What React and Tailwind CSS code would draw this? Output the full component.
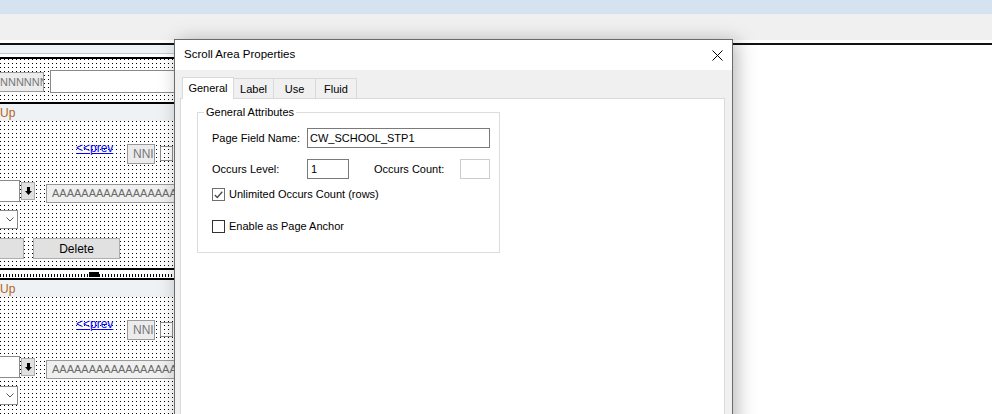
import React from 'react'

const dots =
  'bg-white bg-[image:conic-gradient(at_1px_1px,transparent_270deg,#000_0)] bg-[length:4px_4px]'

const CanvasRow = () => {
  // one scroll-area body on the page designer canvas; fields sit where the designer put them
  return (
    <div className={`relative h-[147px] ${dots}`}>
      <a className="absolute left-[76px] top-[20px] text-[12px] leading-[14px] text-[#0000ff] underline">
        &lt;&lt;prev
      </a>
      <div className="absolute left-[127px] top-[23px] h-[20px] w-[28px] overflow-hidden border border-[#9a9a9a] bg-[#ececec] pl-[5px] text-[12px] leading-[18px] text-[#777]">
        NNI
      </div>
      <div className="absolute left-[160px] top-[25px] h-[15px] w-[13px] border border-[#8c8c8c]" />

      <div className="absolute left-[-20px] top-[59px] h-[22px] w-[40px] border border-[#8a8a8a] bg-white" />
      <div className="absolute left-[21px] top-[61px] flex h-[18px] w-[14px] items-center justify-center border border-[#adadad] bg-[#e1e1e1]">
        <svg width="7" height="8" viewBox="0 0 7 8">
          <rect x="2" y="0" width="3" height="4" fill="#000" />
          <polygon points="0,4 7,4 3.5,8" fill="#000" />
        </svg>
      </div>
      <div className="absolute left-[46px] top-[63px] h-[19px] w-[160px] overflow-hidden whitespace-nowrap border border-[#9a9a9a] bg-[#f0f0f0] pl-[5px] text-[11px] leading-[17px] text-[#6a6a6a]">
        AAAAAAAAAAAAAAAAAAAA
      </div>

      <div className="absolute left-[-20px] top-[89px] flex h-[19px] w-[38px] items-center justify-end border border-[#8a8a8a] bg-white pr-[3px]">
        <svg width="8" height="5" viewBox="0 0 8 5">
          <path d="M0.5 0.5 L4 4 L7.5 0.5" fill="none" stroke="#555" strokeWidth="1" />
        </svg>
      </div>

      <div className="absolute left-[-20px] top-[117px] h-[21px] w-[44px] border border-[#adadad] bg-[#e1e1e1]" />
      <div className="absolute left-[33px] top-[117px] flex h-[21px] w-[87px] items-center justify-center border border-[#adadad] bg-[#e1e1e1] text-[12px] text-black">
        Delete
      </div>
    </div>
  )
}

const Band = () => (
  <div className="h-[17px] bg-[#eef2f4] pt-[2px] text-[12px] leading-[15px] text-[#b8621b]">Up</div>
)

const Tab = ({ label, width, active }) =>
  active ? (
    <div
      className={`relative z-10 -mb-px flex h-[22px] items-center justify-center border border-b-0 border-[#d9d9d9] bg-white ${width}`}
    >
      {label}
    </div>
  ) : (
    <div
      className={`-ml-px flex h-[20px] items-center justify-center border border-b-0 border-[#d9d9d9] bg-[#f0f0f0] pt-[1px] ${width}`}
    >
      {label}
    </div>
  )

export default function App() {
  return (
    <div className="relative h-[414px] w-[992px] overflow-hidden bg-white font-['Liberation_Sans',Arial,sans-serif] text-[11px] text-black">
      {/* window chrome behind the dialog */}
      <div className="h-[14px] bg-[#d5e2f0]" />
      <div className="h-[26px] bg-[#f0f0f0]" />
      <div className="h-[3px] bg-white" />
      <div className="h-[2px] bg-[#111]" />

      <div className="flex">
        {/* page designer canvas */}
        <div className="w-[174px] overflow-hidden">
          <div className="h-[8px] bg-[#eef3f8]" />
          <div className="h-px bg-[#c4c9ce]" />
          <div className="h-[3px] bg-white" />
          <div className="h-[2px] bg-black" />
          <div className={`relative h-[43px] ${dots}`}>
            <div className="absolute left-[-10px] top-[13px] h-[20px] w-[54px] overflow-hidden whitespace-nowrap border border-[#9a9a9a] bg-[#ececec] pl-[9px] text-[11px] leading-[18px] text-[#777]">
              NNNNNNN
            </div>
            <div className="absolute left-[50px] top-[11px] h-[23px] w-[160px] border border-[#8a8a8a] bg-white" />
          </div>
          <div className="h-[2px] bg-black" />
          <Band />
          <CanvasRow />
          <div className="h-[2px] bg-black" />
          <div className="h-[4px] bg-white" />
          <div className="relative h-[3px] bg-[image:repeating-linear-gradient(90deg,#000_0_1px,transparent_1px_3px)]">
            <div className="absolute left-[89px] top-[-2px] h-[5px] w-[10px] bg-black" />
          </div>
          <div className="h-px bg-white" />
          <div className="h-[2px] bg-black" />
          <Band />
          <CanvasRow />
        </div>
        <div className="flex-1 bg-white" />
      </div>

      {/* Scroll Area Properties dialog */}
      <div className="absolute bottom-[-20px] left-[174px] top-[39px] flex w-[559px] flex-col border border-[#6b6b6b] bg-[#f0f0f0] shadow-[4px_2px_18px_rgba(0,0,0,0.28)]">
        <div className="flex h-[30px] shrink-0 items-center justify-between bg-white pl-[9px] pr-[9px]">
          <span className="text-[11.5px]">Scroll Area Properties</span>
          <svg width="11" height="11" viewBox="0 0 11 11">
            <path d="M0.5 0.5 L10.5 10.5 M10.5 0.5 L0.5 10.5" stroke="#000" strokeWidth="1" />
          </svg>
        </div>

        <div className="flex flex-1 flex-col pl-[5px] pr-[7px] pt-[7px]">
          <div className="flex h-[21px] items-end pl-[2px]">
            <Tab label="General" width="w-[52px]" active />
            <Tab label="Label" width="w-[41px]" />
            <Tab label="Use" width="w-[43px]" />
            <Tab label="Fluid" width="w-[42px]" />
          </div>

          <div className="flex-1 border border-[#d9d9d9] bg-white">
            <fieldset className="ml-[16px] mt-[7px] h-[147px] w-[303px] border border-[#dcdcdc] pl-[14px]">
              <legend className="ml-[-8px] px-[2px] leading-[13px]">General Attributes</legend>

              <div className="mt-[9px] flex h-[20px] items-center">
                <span className="w-[95px]">Page Field Name:</span>
                <div className="flex h-[20px] w-[183px] items-center border border-[#7a7a7a] pl-[2px]">
                  CW_SCHOOL_STP1
                </div>
              </div>

              <div className="mt-[11px] flex h-[20px] items-center">
                <span className="w-[95px]">Occurs Level:</span>
                <div className="flex h-[20px] w-[42px] items-center border border-[#7a7a7a] pl-[3px]">1</div>
                <span className="ml-[25px] w-[86px]">Occurs Count:</span>
                <div className="h-[20px] w-[30px] border border-[#cccccc] bg-white" />
              </div>

              <div className="mt-[9px] flex h-[13px] items-center">
                <div className="flex h-[13px] w-[13px] items-center justify-center border border-[#6f6f6f] bg-white">
                  <svg width="9" height="8" viewBox="0 0 9 8">
                    <path d="M0.8 4 L3.3 6.5 L8.3 0.8" fill="none" stroke="#4a4a4a" strokeWidth="1.3" />
                  </svg>
                </div>
                <span className="ml-[4px]">Unlimited Occurs Count (rows)</span>
              </div>

              <div className="mt-[19px] flex h-[13px] items-center">
                <div className="h-[13px] w-[13px] border border-[#333] bg-white" />
                <span className="ml-[4px]">Enable as Page Anchor</span>
              </div>
            </fieldset>
          </div>
        </div>
      </div>
    </div>
  )
}
